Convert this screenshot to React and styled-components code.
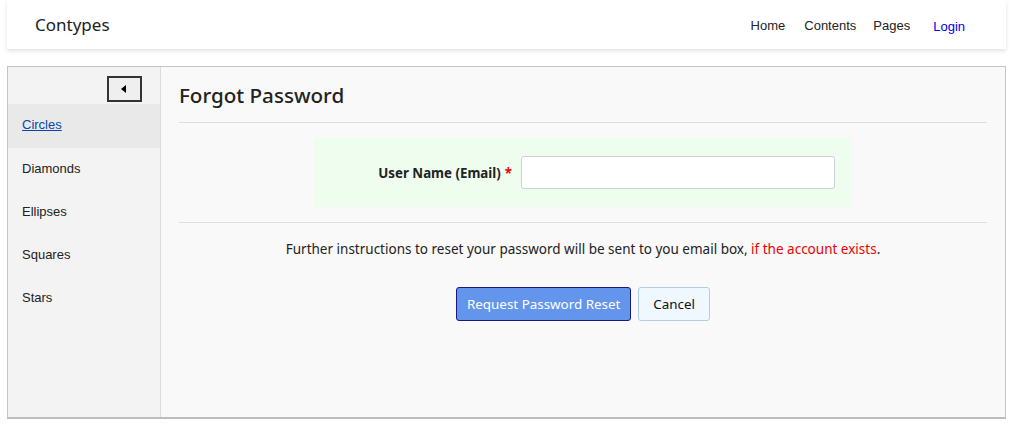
import styled, { createGlobalStyle } from 'styled-components';

const GlobalStyle = createGlobalStyle`
  body {
    margin: 0;
    background: #ffffff;
    font-family: "Noto Sans", "Open Sans", sans-serif;
    color: #222;
  }
`;

const Page = styled.div`
  padding: 0 6px 0 7px;
`;

const Header = styled.header`
  height: 49px;
  display: flex;
  align-items: center;
  justify-content: space-between;
  background: #fff;
  box-shadow: 0 2px 4px rgba(0, 0, 0, 0.12);
  padding: 0 41px 0 28px;
`;

const Brand = styled.div`
  font-size: 17px;
  color: #222;
`;

const Nav = styled.nav`
  display: flex;
  align-items: center;
  font-family: "Liberation Sans", Arial, sans-serif;
  font-size: 13px;
  padding-top: 1px;
`;

const NavLink = styled.a`
  color: ${p => (p.$accent ? '#0000ee' : '#222')};
  margin-left: ${p => p.$gap || 0}px;
  text-decoration: none;
  ${p => p.$accent && 'padding-top: 3px;'}
`;

const Frame = styled.div`
  margin-top: 17px;
  height: 350px;
  display: flex;
  border: 1px solid #c4c4c4;
  border-bottom: 2px solid #bdbdbd;
`;

const Sidebar = styled.aside`
  width: 152px;
  background: #f3f3f3;
  border-right: 1px solid #dcdcdc;
  display: flex;
  flex-direction: column;
  font-family: "Liberation Sans", Arial, sans-serif;
  font-size: 13px;
`;

const ToggleRow = styled.div`
  display: flex;
  justify-content: flex-end;
  padding: 9px 18px 2px 0;
`;

const Toggle = styled.button`
  width: 35px;
  height: 26px;
  border: 2px solid #333;
  background: #efefef;
  display: flex;
  align-items: center;
  justify-content: center;
  padding: 0;
`;

const Arrow = styled.span`
  width: 0;
  height: 0;
  border-top: 4px solid transparent;
  border-bottom: 4px solid transparent;
  border-right: 5px solid #000;
  margin-right: 2px;
`;

const SideItem = styled.div`
  height: ${p => (p.$active ? 44 : 43)}px;
  box-sizing: border-box;
  display: flex;
  align-items: center;
  padding: 0 0 ${p => (p.$active ? 4 : 3)}px 14px;
  background: ${p => (p.$active ? '#e9e9e9' : 'transparent')};
`;

const SideLink = styled.a`
  color: ${p => (p.$active ? '#0645ad' : '#222')};
  text-decoration: ${p => (p.$active ? 'underline' : 'none')};
`;

const Content = styled.main`
  flex: 1;
  background: #f9f9f9;
  padding: 0 18px;
`;

const Title = styled.h1`
  margin: 0;
  height: 55px;
  display: flex;
  align-items: center;
  font-size: 20.6px;
  font-weight: 500;
  color: #222;
  border-bottom: 1px solid #dddddd;
`;

const FormArea = styled.div`
  padding: 15px 0;
  display: flex;
  justify-content: center;
  border-bottom: 1px solid #dddddd;
`;

const FieldPanel = styled.div`
  width: 538px;
  height: 69px;
  background: #effdef;
  display: flex;
  align-items: center;
  box-sizing: border-box;
  padding-right: 17px;
`;

const Label = styled.label`
  width: 207px;
  box-sizing: border-box;
  text-align: right;
  font-size: 13.3px;
  font-weight: 700;
  color: #222;
  padding-right: 9px;
`;

const Required = styled.span`
  color: #ee0000;
  margin-left: 4px;
`;

const Input = styled.input`
  flex: 1;
  height: 33px;
  box-sizing: border-box;
  border: 1px solid #ccd0d6;
  border-radius: 3px;
  background: #fff;
`;

const Note = styled.p`
  margin: 17px 0 0;
  text-align: center;
  font-size: 13.5px;
  color: #222;
`;

const Warn = styled.span`
  color: #ee0000;
`;

const Actions = styled.div`
  display: flex;
  justify-content: center;
  gap: 7px;
  margin-top: 29px;
`;

const Button = styled.button`
  height: 34px;
  padding: 0 ${p => (p.$primary ? 10 : 14)}px;
  font-family: "Noto Sans", "Open Sans", sans-serif;
  font-size: 13.4px;
  border-radius: 3px;
  border: 1px solid ${p => (p.$primary ? '#1a1a7a' : '#b4cbe4')};
  background: ${p => (p.$primary ? '#6495ed' : '#f0f8ff')};
  color: ${p => (p.$primary ? '#fff' : '#111')};
`;

const sideItems = ['Circles', 'Diamonds', 'Ellipses', 'Squares', 'Stars'];

export default function App() {
  return (
    <Page>
      <GlobalStyle />
      <Header>
        <Brand>Contypes</Brand>
        <Nav>
          <NavLink>Home</NavLink>
          <NavLink $gap={19}>Contents</NavLink>
          <NavLink $gap={17}>Pages</NavLink>
          <NavLink $gap={23} $accent>Login</NavLink>
        </Nav>
      </Header>
      <Frame>
        <Sidebar>
          <ToggleRow>
            <Toggle><Arrow /></Toggle>
          </ToggleRow>
          {sideItems.map((s, i) => (
            <SideItem key={s} $active={i === 0}>
              <SideLink href="#" $active={i === 0}>{s}</SideLink>
            </SideItem>
          ))}
        </Sidebar>
        <Content>
          <Title>Forgot Password</Title>
          <FormArea>
            <FieldPanel>
              <Label>User Name (Email)<Required>*</Required></Label>
              <Input type="text" />
            </FieldPanel>
          </FormArea>
          <Note>
            Further instructions to reset your password will be sent to you email box, <Warn>if the account exists</Warn>.
          </Note>
          <Actions>
            <Button $primary>Request Password Reset</Button>
            <Button>Cancel</Button>
          </Actions>
        </Content>
      </Frame>
    </Page>
  );
}
